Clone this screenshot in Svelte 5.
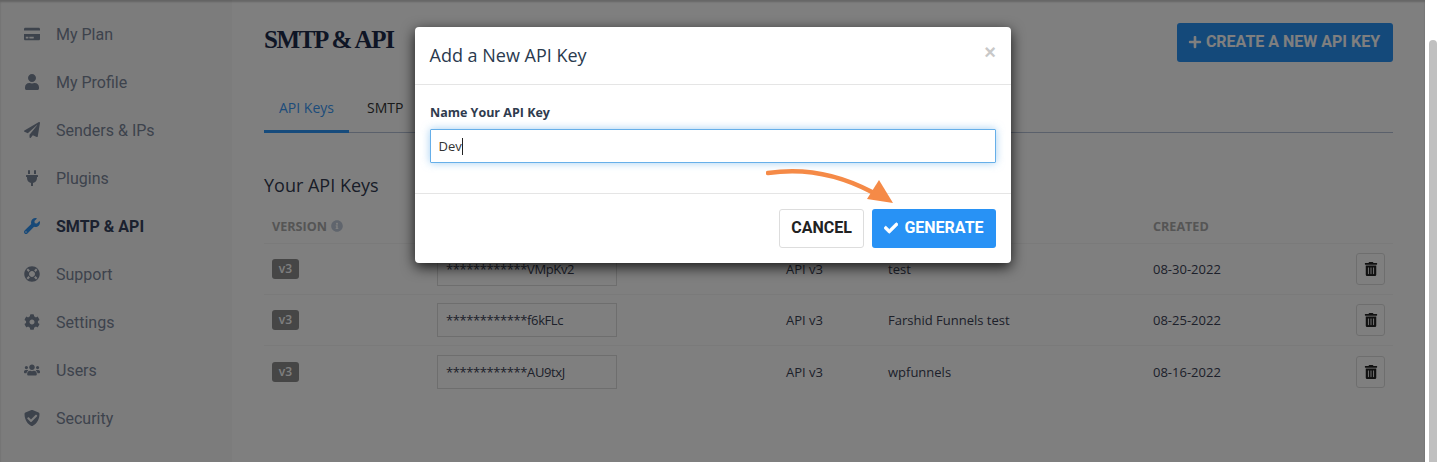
<script>
	const icons = {
		card: ['0 0 576 512', 'M0 432c0 26.5 21.5 48 48 48h480c26.5 0 48-21.5 48-48V256H0v176zm192-68c0-6.6 5.4-12 12-12h136c6.6 0 12 5.4 12 12v40c0 6.6-5.4 12-12 12H204c-6.6 0-12-5.4-12-12v-40zm-128 0c0-6.6 5.4-12 12-12h72c6.6 0 12 5.4 12 12v40c0 6.6-5.4 12-12 12H76c-6.6 0-12-5.4-12-12v-40zM576 80v48H0V80c0-26.5 21.5-48 48-48h480c26.5 0 48 21.5 48 48z'],
		user: ['0 0 448 512', 'M224 256c70.7 0 128-57.3 128-128S294.7 0 224 0 96 57.3 96 128s57.3 128 128 128zm89.6 32h-16.7c-22.2 10.2-46.9 16-72.9 16s-50.6-5.8-72.9-16h-16.7C60.2 288 0 348.2 0 422.4V464c0 26.5 21.5 48 48 48h352c26.5 0 48-21.5 48-48v-41.6c0-74.2-60.2-134.4-134.4-134.4z'],
		plane: ['0 0 512 512', 'M476 3.2L12.5 270.6c-18.1 10.4-15.8 35.6 2.2 43.2L121 358.4l287.3-253.2c5.5-4.9 13.3 2.6 8.6 8.3L176 407v80.5c0 23.6 28.5 32.9 42.5 15.8L282 426l124.6 52.2c14.2 6 30.4-2.9 33-18.2l72-432C515 7.8 493.3-6.8 476 3.2z'],
		plug: ['0 0 384 512', 'M320,32a32,32,0,0,0-64,0v96h64Zm48,128H16A16,16,0,0,0,0,176v32a16,16,0,0,0,16,16H32v32A160.07,160.07,0,0,0,160,412.8V512h64V412.8A160.07,160.07,0,0,0,352,256V224h16a16,16,0,0,0,16-16V176A16,16,0,0,0,368,160ZM128,32a32,32,0,0,0-64,0v96h64Z'],
		wrench: ['0 0 512 512', 'M507.73 109.1c-2.24-9.03-13.54-12.09-20.12-5.51l-74.36 74.36-67.88-11.31-11.31-67.88 74.36-74.36c6.62-6.62 3.43-17.9-5.66-20.16-47.38-11.74-99.55.91-136.58 37.93-39.64 39.64-50.55 97.1-34.05 147.2L18.74 402.76c-24.99 24.99-24.99 65.51 0 90.5 24.99 24.99 65.51 24.99 90.5 0l213.21-213.21c50.12 16.71 107.47 5.68 147.37-34.22 37.07-37.07 49.7-89.32 37.91-136.73zM64 472c-13.25 0-24-10.75-24-24 0-13.26 10.75-24 24-24s24 10.74 24 24c0 13.25-10.75 24-24 24z'],
		ring: ['0 0 512 512', 'M256 8C119.033 8 8 119.033 8 256s111.033 248 248 248 248-111.033 248-248S392.967 8 256 8zm173.696 119.559l-63.399 63.399c-10.987-18.559-26.67-34.252-45.255-45.255l63.399-63.399a218.396 218.396 0 0 1 45.255 45.255zM256 352c-53.019 0-96-42.981-96-96s42.981-96 96-96 96 42.981 96 96-42.981 96-96 96zM127.559 82.304l63.399 63.399c-18.559 10.987-34.252 26.67-45.255 45.255l-63.399-63.399a218.372 218.372 0 0 1 45.255-45.255zM82.304 384.441l63.399-63.399c10.987 18.559 26.67 34.252 45.255 45.255l-63.399 63.399a218.396 218.396 0 0 1-45.255-45.255zm302.137 45.255l-63.399-63.399c18.559-10.987 34.252-26.67 45.255-45.255l63.399 63.399a218.403 218.403 0 0 1-45.255 45.255z'],
		cog: ['0 0 512 512', 'M487.4 315.7l-42.6-24.6c4.3-23.2 4.3-47 0-70.2l42.6-24.6c4.9-2.8 7.1-8.6 5.5-14-11.1-35.6-30-67.8-54.7-94.6-3.8-4.1-10-5.1-14.8-2.3L380.8 110c-17.9-15.4-38.5-27.3-60.8-35.1V25.8c0-5.6-3.9-10.5-9.4-11.7-36.7-8.2-74.3-7.8-109.2 0-5.5 1.2-9.4 6.1-9.4 11.7V75c-22.2 7.9-42.8 19.8-60.8 35.1L88.7 85.5c-4.9-2.8-11-1.9-14.8 2.3-24.7 26.7-43.6 58.9-54.7 94.6-1.7 5.4.6 11.2 5.5 14L67.3 221c-4.3 23.2-4.3 47 0 70.2l-42.6 24.6c-4.9 2.8-7.1 8.6-5.5 14 11.1 35.6 30 67.8 54.7 94.6 3.8 4.1 10 5.1 14.8 2.3l42.6-24.6c17.9 15.4 38.5 27.3 60.8 35.1v49.2c0 5.6 3.9 10.5 9.4 11.7 36.7 8.2 74.3 7.8 109.2 0 5.5-1.2 9.4-6.1 9.4-11.7v-49.2c22.2-7.9 42.8-19.8 60.8-35.1l42.6 24.6c4.9 2.8 11 1.9 14.8-2.3 24.7-26.7 43.6-58.9 54.7-94.6 1.5-5.5-.7-11.3-5.6-14.1zM256 336c-44.1 0-80-35.9-80-80s35.9-80 80-80 80 35.9 80 80-35.9 80-80 80z'],
		users: ['0 0 640 512', 'M96 224c35.3 0 64-28.7 64-64s-28.7-64-64-64-64 28.7-64 64 28.7 64 64 64zm448 0c35.3 0 64-28.7 64-64s-28.7-64-64-64-64 28.7-64 64 28.7 64 64 64zm32 32h-64c-17.6 0-33.5 7.1-45.1 18.6 40.3 22.1 68.9 62 75.1 109.4h66c17.7 0 32-14.3 32-32v-32c0-35.3-28.7-64-64-64zm-256 0c61.9 0 112-50.1 112-112S381.9 32 320 32 208 82.1 208 144s50.1 112 112 112zm76.8 32h-8.3c-20.8 10-43.9 16-68.5 16s-47.6-6-68.5-16h-8.3C179.6 288 128 339.6 128 403.2V432c0 26.5 21.5 48 48 48h288c26.5 0 48-21.5 48-48v-28.8c0-63.6-51.6-115.2-115.2-115.2zm-223.7-13.4C161.5 263.1 145.6 256 128 256H64c-35.3 0-64 28.7-64 64v32c0 17.7 14.3 32 32 32h65.9c6.3-47.4 34.9-87.3 75.2-109.4z'],
		shield: ['0 0 512 512', 'M466.5 83.7l-192-80a48.15 48.15 0 0 0-36.9 0l-192 80C27.7 91.1 16 108.6 16 128c0 198.5 114.5 335.7 221.5 380.3 11.8 4.9 25.1 4.9 36.9 0C360.1 472.6 496 349.3 496 128c0-19.4-11.7-36.9-29.5-44.3zm-47.2 114.2l-184 184c-6.2 6.2-16.4 6.2-22.6 0l-104-104c-6.2-6.2-6.2-16.4 0-22.6l22.6-22.6c6.2-6.2 16.4-6.2 22.6 0l70.1 70.1 150.1-150.1c6.2-6.2 16.4-6.2 22.6 0l22.6 22.6c6.2 6.3 6.2 16.4 0 22.6z'],
		info: ['0 0 512 512', 'M256 8C119.043 8 8 119.083 8 256c0 136.997 111.043 248 248 248s248-111.003 248-248C504 119.083 392.957 8 256 8zm0 110c23.196 0 42 18.804 42 42s-18.804 42-42 42-42-18.804-42-42 18.804-42 42-42zm56 254c0 6.627-5.373 12-12 12h-88c-6.627 0-12-5.373-12-12v-24c0-6.627 5.373-12 12-12h12v-64h-12c-6.627 0-12-5.373-12-12v-24c0-6.627 5.373-12 12-12h64c6.627 0 12 5.373 12 12v100h12c6.627 0 12 5.373 12 12v24z'],
		plus: ['0 0 448 512', 'M416 208H272V64c0-17.67-14.33-32-32-32h-32c-17.67 0-32 14.33-32 32v144H32c-17.67 0-32 14.33-32 32v32c0 17.67 14.33 32 32 32h144v144c0 17.67 14.33 32 32 32h32c17.67 0 32-14.33 32-32V304h144c17.67 0 32-14.33 32-32v-32c0-17.67-14.33-32-32-32z'],
		check: ['0 0 512 512', 'M173.898 439.404l-166.4-166.4c-9.997-9.997-9.997-26.206 0-36.204l36.203-36.204c9.997-9.998 26.207-9.998 36.204 0L192 312.69 432.095 72.596c9.997-9.997 26.207-9.997 36.204 0l36.203 36.204c9.997 9.997 9.997 26.206 0 36.204l-294.4 294.401c-9.998 9.997-26.207 9.997-36.204-.001z'],
		trash: ['0 0 448 512', 'M32 464a48 48 0 0 0 48 48h288a48 48 0 0 0 48-48V128H32zm272-256a16 16 0 0 1 32 0v224a16 16 0 0 1-32 0zm-96 0a16 16 0 0 1 32 0v224a16 16 0 0 1-32 0zm-96 0a16 16 0 0 1 32 0v224a16 16 0 0 1-32 0zM432 32H312l-9.4-18.7A24 24 0 0 0 281.1 0H166.8a23.72 23.72 0 0 0-21.4 13.3L136 32H16A16 16 0 0 0 0 48v32a16 16 0 0 0 16 16h416a16 16 0 0 0 16-16V48a16 16 0 0 0-16-16z']
	};

	const menu = [
		{ label: 'My Plan', icon: 'card' },
		{ label: 'My Profile', icon: 'user' },
		{ label: 'Senders & IPs', icon: 'plane' },
		{ label: 'Plugins', icon: 'plug' },
		{ label: 'SMTP & API', icon: 'wrench', active: true },
		{ label: 'Support', icon: 'ring' },
		{ label: 'Settings', icon: 'cog' },
		{ label: 'Users', icon: 'users' },
		{ label: 'Security', icon: 'shield' }
	];

	const keys = [
		{ key: '************VMpKv2', name: 'test', created: '08-30-2022' },
		{ key: '************f6kFLc', name: 'Farshid Funnels test', created: '08-25-2022' },
		{ key: '************AU9txJ', name: 'wpfunnels', created: '08-16-2022' }
	];
</script>

{#snippet icon(name, size)}
	<svg class="ico" width={size} height={size} viewBox={icons[name][0]} fill="currentColor" aria-hidden="true">
		<path d={icons[name][1]} />
	</svg>
{/snippet}

<div class="window">
	<div class="page">
		<aside class="sidebar">
			{#each menu as item}
				<a class="nav-item" class:active={item.active} href="#top">
					<span class="nav-icon">{@render icon(item.icon, 16)}</span>
					{item.label}
				</a>
			{/each}
		</aside>

		<main class="content">
			<header class="head">
				<h1>SMTP &amp; API</h1>
				<button class="create">{@render icon('plus', 14)} CREATE A NEW API KEY</button>
			</header>

			<nav class="tabs">
				<span class="tab current">API Keys</span>
				<span class="tab">SMTP</span>
			</nav>

			<h2>Your API Keys</h2>

			<div class="row labels">
				<span class="version">VERSION <span class="info">{@render icon('info', 12)}</span></span>
				<span class="under"></span>
				<span class="under"></span>
				<span class="under"></span>
				<span>CREATED</span>
			</div>
			{#each keys as row}
				<div class="row">
					<span><span class="badge">v3</span></span>
					<input class="key" readonly value={row.key} />
					<span>API v3</span>
					<span>{row.name}</span>
					<span>{row.created}</span>
					<button class="trash" aria-label="Delete">{@render icon('trash', 14)}</button>
				</div>
			{/each}
		</main>

		<div class="backdrop"></div>

		<section class="modal">
			<div class="modal-head">
				<h3>Add a New API Key</h3>
				<span class="close">×</span>
			</div>
			<div class="modal-body">
				<label for="key-name">Name Your API Key</label>
				<div class="field" id="key-name">Dev<i class="caret"></i></div>
			</div>
			<div class="modal-foot">
				<button class="cancel">CANCEL</button>
				<button class="generate">{@render icon('check', 14)} GENERATE</button>
			</div>
			<svg class="arrow" width="140" height="50" viewBox="0 0 140 50" aria-hidden="true">
				<path d="M2 8 Q55 0 106 27" fill="none" stroke="#f58a47" stroke-width="4.5" stroke-linecap="round" />
				<path d="M113 15 L127 38 L101 34 Z" fill="#f58a47" />
			</svg>
		</section>
	</div>
	<div class="scrollbar"><div class="thumb"></div></div>
</div>

<style>
	:global(body) {
		margin: 0;
		background: #fff;
	}

	.window {
		display: flex;
		height: 462px;
		overflow: hidden;
	}

	.page {
		position: relative;
		flex: 1;
		display: flex;
		background: #fff;
		overflow: hidden;
	}

	.scrollbar {
		width: 15px;
		box-sizing: border-box;
		padding: 40px 3px 0 4px;
		background: #fff;
	}

	.thumb {
		height: 422px;
		border-radius: 4px 4px 0 0;
		background: #c0c0c0;
	}

	.backdrop {
		position: absolute;
		inset: 0;
		background: rgba(0, 0, 0, 0.5);
		box-shadow: inset 0 2px 2px rgba(0, 0, 0, 0.2);
	}

	.sidebar {
		width: 232px;
		flex: none;
		box-sizing: border-box;
		padding-top: 10px;
		background: #f9f9f9;
	}

	.nav-item {
		display: flex;
		align-items: center;
		gap: 16px;
		height: 48px;
		padding-left: 24px;
		font: 400 16px 'Roboto', sans-serif;
		color: #7b8699;
		text-decoration: none;
	}

	.nav-item.active {
		font-weight: 700;
		color: #36435f;
	}

	.nav-item.active .nav-icon {
		color: #2f92f0;
	}

	.nav-icon {
		display: flex;
		width: 16px;
		justify-content: center;
	}

	.content {
		flex: 1;
		min-width: 0;
		padding: 0 32px;
		font: 400 13px 'Open Sans', sans-serif;
		color: #3a4154;
	}

	.head {
		display: flex;
		justify-content: space-between;
		align-items: flex-start;
		padding-top: 23px;
		height: 63px;
		box-sizing: content-box;
	}

	h1 {
		margin: 2px 0 0;
		font: 700 25px/30px 'Liberation Serif', serif;
		letter-spacing: -1.35px;
		color: #1c2b4a;
	}

	.create {
		display: flex;
		align-items: center;
		justify-content: center;
		gap: 4px;
		width: 216px;
		height: 39px;
		padding: 0 2px 2px 0;
		border: 0;
		border-radius: 3px;
		background: #2892f5;
		font: 700 16px 'Roboto', sans-serif;
		color: #fff;
	}

	.tabs {
		display: flex;
		height: 47px;
		border-bottom: 1px solid #b4c0d6;
		box-sizing: border-box;
	}

	.tab {
		padding: 12px 15px 0 18px;
		font-size: 14px;
		line-height: 19px;
		color: #333;
	}

	.tab.current {
		padding: 12px 15px 0;
		height: 47px;
		box-sizing: border-box;
		color: #3a98f5;
		border-bottom: 3px solid #2c96f8;
	}

	h2 {
		margin: 40px 0 0;
		font: 400 18px/24px 'Open Sans', sans-serif;
		color: #323a50;
	}

	.row {
		display: grid;
		grid-template-columns: 165px 349px 102px 265px 1fr auto;
		align-items: center;
		height: 51px;
		box-sizing: border-box;
		padding: 0 8px;
		border-bottom: 1px solid #f4f4f4;
	}

	.row:last-child {
		border-bottom: 0;
	}

	.labels {
		height: 33px;
		margin-top: 14px;
		padding-bottom: 2px;
		font-size: 12.6px;
		font-weight: 700;
		color: #aaa;
		grid-template-columns: 165px 349px 102px 265px 1fr;
	}

	.version {
		display: flex;
		align-items: center;
		gap: 4px;
	}

	.info {
		display: flex;
		color: #c0cbda;
	}

	.badge {
		display: block;
		width: 27px;
		height: 20px;
		border-radius: 3px;
		background: #8c8c8c;
		font-size: 12px;
		font-weight: 600;
		line-height: 20px;
		text-align: center;
		color: #fff;
	}

	.key {
		width: 180px;
		height: 34px;
		box-sizing: border-box;
		padding: 0 8px;
		border: 1px solid #ddd;
		border-radius: 0;
		background: #fff;
		font: 400 13px 'Open Sans', sans-serif;
		letter-spacing: -0.4px;
		color: #3a4154;
		outline: none;
	}

	.trash {
		display: flex;
		align-items: center;
		justify-content: center;
		width: 29px;
		height: 32px;
		padding: 0;
		border: 1px solid #ddd;
		border-radius: 3px;
		background: #fff;
		color: #222;
	}

	.modal {
		position: absolute;
		left: 415px;
		top: 27px;
		width: 596px;
		height: 236px;
		border-radius: 4px;
		background: #fff;
		box-shadow: 0 4px 14px rgba(0, 0, 0, 0.82);
		font-family: 'Open Sans', sans-serif;
	}

	.modal-head {
		display: flex;
		align-items: center;
		justify-content: space-between;
		height: 56px;
		padding: 0 15px 1px 14.5px;
		border-bottom: 1px solid #e5e5e5;
	}

	h3 {
		margin: 0;
		font: 400 18px/24px 'Open Sans', sans-serif;
		color: #2a3a4e;
	}

	.close {
		margin-top: -6px;
		font: 700 20px 'Liberation Sans', sans-serif;
		color: #c8c8c8;
	}

	.modal-body {
		height: 109px;
		box-sizing: border-box;
		padding: 19px 15px 0;
		border-bottom: 1px solid #e5e5e5;
	}

	label {
		display: block;
		margin-bottom: 7px;
		font-size: 12.5px;
		font-weight: 700;
		line-height: 18px;
		color: #2f3b4e;
	}

	.field {
		height: 34px;
		box-sizing: border-box;
		padding: 0 7.5px;
		border: 1px solid #66afe9;
		border-radius: 1px;
		box-shadow: 0 0 8px rgba(102, 175, 233, 0.6);
		font-size: 13px;
		line-height: 32px;
		color: #333;
	}

	.caret {
		display: inline-block;
		width: 1px;
		height: 17px;
		vertical-align: -4px;
		background: #222;
	}

	.modal-foot {
		display: flex;
		justify-content: flex-end;
		gap: 8px;
		padding: 15px 15px 0;
	}

	.modal-foot button {
		height: 39px;
		padding: 0 0 2px;
		border-radius: 3px;
		font: 700 16px 'Roboto', sans-serif;
	}

	.cancel {
		width: 85px;
		border: 1px solid #ddd;
		background: #fff;
		color: #222;
	}

	.generate {
		display: flex;
		align-items: center;
		justify-content: center;
		gap: 6px;
		width: 124px;
		border: 0;
		background: #2892f5;
		color: #fff;
	}

	.generate .ico {
		stroke: #fff;
		stroke-width: 30;
	}

	.arrow {
		position: absolute;
		left: 351px;
		top: 138px;
		pointer-events: none;
	}

	.ico {
		display: block;
		flex: none;
	}
</style>
